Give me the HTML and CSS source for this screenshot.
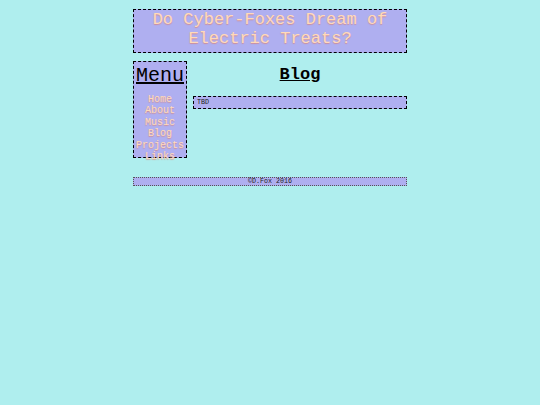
FILE: index.html
```
<!DOCTYPE html>
<html>
<head>
<meta charset="utf-8">
<link rel="stylesheet" href="styles.css">
</head>
<body>
<div class="page">
  <header class="banner">Do Cyber-Foxes Dream of<br>Electric Treats?</header>
  <div class="middle">
    <nav class="menu">
      <div class="menu-title">Menu</div>
      <ul class="menu-list">
        <li>Home</li>
        <li>About</li>
        <li>Music</li>
        <li>Blog</li>
        <li>Projects</li>
        <li>Links</li>
      </ul>
    </nav>
    <main class="content">
      <h2 class="content-title">Blog</h2>
      <div class="post">TBD</div>
    </main>
  </div>
  <footer class="foot">©D.Fox 2016</footer>
</div>
</body>
</html>
```
FILE: styles.css
```
html, body {
  margin: 0;
  padding: 0;
  background: #afeeee;
  font-family: "Liberation Mono", "DejaVu Sans Mono", monospace;
}
.page {
  width: 274px;
  margin: 0 auto;
  padding-top: 9px;
}
.banner {
  box-sizing: border-box;
  height: 44px;
  border: 1px dashed #000;
  background: #afaff0;
  color: #ffdab9;
  text-shadow: 0 1px 1px rgba(225, 120, 100, 0.6);
  font-size: 17px;
  line-height: 19px;
  text-align: center;
  padding-top: 0;
}
.middle {
  display: flex;
  align-items: flex-start;
  gap: 6px;
  margin-top: 8px;
}
.menu {
  box-sizing: border-box;
  width: 54px;
  height: 97px;
  border: 1px dashed #000;
  background: #afaff0;
  flex: none;
}
.menu-title {
  font-size: 20px;
  line-height: 24px;
  text-decoration: underline;
  color: #000;
  text-align: center;
  margin-top: 2px;
}
.menu-list {
  list-style: none;
  margin: 6px 0 0;
  padding: 0;
  text-align: center;
  font-size: 10px;
  line-height: 11.4px;
  color: #ffdab9;
  text-shadow: 0 1px 1px rgba(225, 120, 100, 0.6);
  white-space: nowrap;
}
.content {
  flex: 1;
}
.content-title {
  margin: 4px 0 0;
  font-size: 17px;
  line-height: 20px;
  font-weight: bold;
  text-decoration: underline;
  text-align: center;
  color: #000;
}
.post {
  box-sizing: border-box;
  margin-top: 11px;
  height: 13px;
  border: 1px dashed #000;
  background: #afaff0;
  font-size: 6.7px;
  line-height: 11px;
  padding-left: 3px;
  color: #222;
}
.foot {
  box-sizing: border-box;
  margin-top: 19px;
  height: 9px;
  border: 1px dotted #555;
  background: #afaff0;
  font-size: 6.7px;
  line-height: 7px;
  text-align: center;
  color: #222;
}
```
